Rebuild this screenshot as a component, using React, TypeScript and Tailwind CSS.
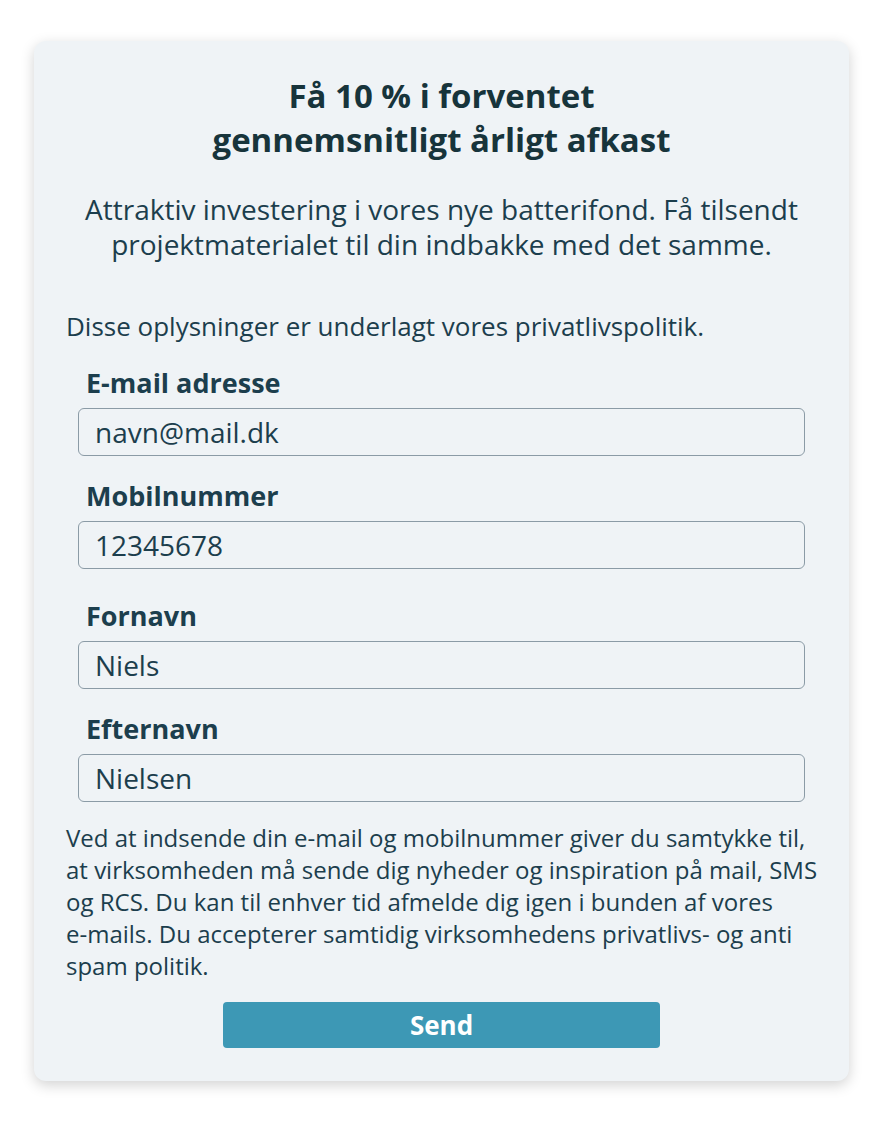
import React from 'react';

const fields = [
  { label: 'E-mail adresse', value: 'navn@mail.dk', type: 'email', extra: false },
  { label: 'Mobilnummer', value: '12345678', type: 'tel', extra: true },
  { label: 'Fornavn', value: 'Niels', type: 'text', extra: false },
  { label: 'Efternavn', value: 'Nielsen', type: 'text', extra: false },
];

export default function App() {
  return (
    <div className="min-h-screen bg-white pt-[41px] pl-[34px] font-['Open_Sans',sans-serif] text-[#1c3e4d]">
      <div className="w-[815px] rounded-xl bg-[#eff3f6] shadow-[0_4px_14px_rgba(0,0,0,0.18)] px-8 pt-[33px] pb-[33px]">
        <h1 className="text-center text-[33px] font-bold leading-[44px] text-[#17343b]">
          Få 10 % i forventet
          <br />
          gennemsnitligt årligt afkast
        </h1>

        <p className="mt-[30px] text-center text-[28px] leading-[35px]">
          Attraktiv investering i vores nye batterifond. Få tilsendt
          <br />
          projektmaterialet til din indbakke med det samme.
        </p>

        <p className="mt-[48px] text-[26px] leading-[32px]">
          Disse oplysninger er underlagt vores privatlivspolitik.
        </p>

        <div className="mt-[23px] flex flex-col">
          {fields.map((f, i) => (
            <label key={f.label} className={`block px-3 ${i > 0 ? (fields[i - 1].extra ? 'mt-[29px]' : 'mt-[22px]') : ''}`}>
              <span className="block pl-2 text-[27px] font-bold leading-[36px]">{f.label}</span>
              <input
                type={f.type}
                defaultValue={f.value}
                className="mt-[7px] block h-[48px] w-full rounded-md border border-[#8b9ba6] bg-[#eff3f6] px-4 text-[28px] text-[#1c3e4d] outline-none"
              />
            </label>
          ))}
        </div>

        <p className="mt-[20px] whitespace-nowrap text-[24px] leading-[32px]">
          Ved at indsende din e-mail og mobilnummer giver du samtykke til,
          <br />
          at virksomheden må sende dig nyheder og inspiration på mail, SMS
          <br />
          og RCS. Du kan til enhver tid afmelde dig igen i bunden af vores
          <br />
          e-mails. Du accepterer samtidig virksomhedens privatlivs- og anti
          <br />
          spam politik.
        </p>

        <div className="mt-[20px] flex justify-center">
          <button className="h-[46px] w-[437px] rounded bg-[#3d98b5] text-[26px] font-bold text-white">
            Send
          </button>
        </div>
      </div>
    </div>
  );
}
